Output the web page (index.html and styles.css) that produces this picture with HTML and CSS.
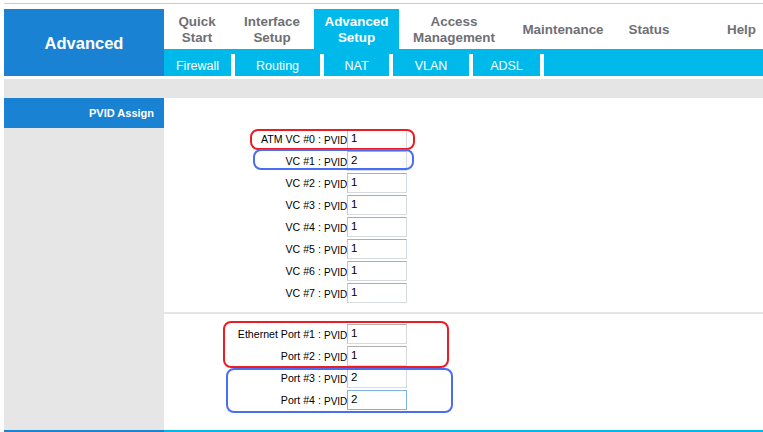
FILE: index.html
```html
<!DOCTYPE html>
<html>
<head>
<meta charset="utf-8">
<link rel="stylesheet" href="styles.css">
</head>
<body>
<div class="page">
  <div class="top-line"></div>
  <header class="header">
    <div class="brand">Advanced</div>
    <div class="nav">
      <div class="tabs">
        <div class="tab t-quick">Quick<br>Start</div>
        <div class="tab t-iface">Interface<br>Setup</div>
        <div class="tab t-adv active">Advanced<br>Setup</div>
        <div class="tab t-access">Access<br>Management</div>
        <div class="tab t-maint">Maintenance</div>
        <div class="tab t-status">Status</div>
        <div class="tab t-help">Help</div>
      </div>
      <div class="subnav">
        <div class="sub s-fw">Firewall</div>
        <div class="sub s-rt">Routing</div>
        <div class="sub s-nat">NAT</div>
        <div class="sub s-vlan">VLAN</div>
        <div class="sub s-adsl">ADSL</div>
        <div class="sub s-rest"></div>
      </div>
    </div>
  </header>
  <div class="band"></div>
  <main class="main">
    <aside class="sidebar">
      <div class="side-title">PVID Assign</div>
    </aside>
    <section class="content">
      <div class="group g1">
        <div class="row"><span class="lbl">ATM VC #0</span><span class="colon">:</span><span class="pvid">PVID</span><span class="inp">1</span></div>
        <div class="row"><span class="lbl">VC #1</span><span class="colon">:</span><span class="pvid">PVID</span><span class="inp">2</span></div>
        <div class="row"><span class="lbl">VC #2</span><span class="colon">:</span><span class="pvid">PVID</span><span class="inp">1</span></div>
        <div class="row"><span class="lbl">VC #3</span><span class="colon">:</span><span class="pvid">PVID</span><span class="inp">1</span></div>
        <div class="row"><span class="lbl">VC #4</span><span class="colon">:</span><span class="pvid">PVID</span><span class="inp">1</span></div>
        <div class="row"><span class="lbl">VC #5</span><span class="colon">:</span><span class="pvid">PVID</span><span class="inp">1</span></div>
        <div class="row"><span class="lbl">VC #6</span><span class="colon">:</span><span class="pvid">PVID</span><span class="inp">1</span></div>
        <div class="row"><span class="lbl">VC #7</span><span class="colon">:</span><span class="pvid">PVID</span><span class="inp">1</span></div>
      </div>
      <div class="sep"></div>
      <div class="group g2">
        <div class="row"><span class="lbl">Ethernet Port #1</span><span class="colon">:</span><span class="pvid">PVID</span><span class="inp">1</span></div>
        <div class="row"><span class="lbl">Port #2</span><span class="colon">:</span><span class="pvid">PVID</span><span class="inp">1</span></div>
        <div class="row"><span class="lbl">Port #3</span><span class="colon">:</span><span class="pvid">PVID</span><span class="inp">2</span></div>
        <div class="row"><span class="lbl">Port #4</span><span class="colon">:</span><span class="pvid">PVID</span><span class="inp focus">2</span></div>
      </div>
      <div class="mark red m1"></div>
      <div class="mark blue m2"></div>
      <div class="mark red m3"></div>
      <div class="mark blue m4"></div>
    </section>
  </main>
  <div class="bottom">
    <div class="bottom-left"></div>
    <div class="bottom-right"></div>
  </div>
</div>
</body>
</html>
```

FILE: styles.css
```css
html, body {
  margin: 0;
  padding: 0;
  background: #fff;
  font-family: "Liberation Sans", Arial, sans-serif;
  overflow: hidden;
}
.page {
  margin-left: 4px;
  width: 759px;
  padding-top: 3px;
}
.top-line {
  height: 1px;
  background: #cccccc;
  margin-bottom: 5px;
}
.header {
  display: flex;
  height: 67px;
}
.brand {
  width: 160px;
  background: #1a82d3;
  color: #fff;
  font-weight: bold;
  font-size: 16.5px;
  display: flex;
  align-items: center;
  justify-content: center;
  padding-top: 1px;
  box-sizing: border-box;
}
.nav {
  flex: 1;
  display: flex;
  flex-direction: column;
}
.tabs {
  display: flex;
  height: 40px;
}
.tab {
  display: flex;
  align-items: center;
  justify-content: center;
  text-align: center;
  font-weight: bold;
  font-size: 13.4px;
  line-height: 16px;
  color: #6f6f74;
  padding-top: 1px;
  box-sizing: border-box;
}
.tab.active {
  background: #00b9eb;
  color: #fff;
}
.t-quick { width: 66px; }
.t-iface { width: 84px; }
.t-adv { width: 85px; }
.t-access { width: 110px; }
.t-maint { width: 108px; }
.t-status { width: 64px; }
.t-help { flex: 1; justify-content: flex-end; padding-right: 7px; }
.subnav {
  height: 27px;
  background: #00b9eb;
  padding-top: 5px;
  box-sizing: border-box;
  display: flex;
}
.sub {
  color: #fff;
  font-size: 12.5px;
  display: flex;
  align-items: center;
  justify-content: center;
  border-right: 4px solid #fff;
  height: 22px;
  padding-top: 1px;
  box-sizing: border-box;
}
.s-fw { width: 71px; }
.s-rt { width: 89px; }
.s-nat { width: 69px; }
.s-vlan { width: 80px; }
.s-adsl { width: 71px; }
.s-rest { flex: 1; border-right: none; }
.band {
  height: 19px;
  margin-top: 3px;
  background: #e5e5e5;
}
.main {
  display: flex;
  height: 332px;
}
.sidebar {
  width: 160px;
  background: #e6e6e6;
}
.side-title {
  height: 30px;
  background: #1a82d3;
  color: #fff;
  font-weight: bold;
  font-size: 11px;
  display: flex;
  align-items: center;
  justify-content: flex-end;
  padding-right: 10px;
  box-sizing: border-box;
}
.content {
  flex: 1;
  position: relative;
}
.group.g1 {
  padding-top: 31px;
  padding-bottom: 7px;
}
.group.g2 {
  padding-top: 10px;
}
.sep {
  height: 2px;
  background: #e5e5e5;
}
.row {
  display: flex;
  height: 22px;
  align-items: flex-start;
  font-size: 10.6px;
  color: #000;
}
.lbl {
  width: 151px;
  text-align: right;
  line-height: 20px;
}
.colon {
  width: 9px;
  text-align: center;
  line-height: 20px;
}
.pvid {
  width: 23px;
  line-height: 20px;
  padding-top: 2px;
  font-size: 10px;
  white-space: nowrap;
}
.inp {
  width: 60px;
  height: 20px;
  box-sizing: border-box;
  border: 1px solid #d6dbe1;
  border-top-color: #adadad;
  border-left-color: #c4c8cc;
  font-size: 11.5px;
  line-height: 17px;
  padding-left: 3px;
  background: #fff;
}
.inp.focus {
  border-color: #7db4e6;
}
.mark {
  position: absolute;
  box-sizing: border-box;
  border-width: 2px;
  border-style: solid;
  border-radius: 8px;
}
.red { border-color: #ed1c24; }
.blue { border-color: #4a6ef2; }
.m1 { left: 86px; top: 31px; width: 165px; height: 21px; }
.m2 { left: 89px; top: 51px; width: 161px; height: 21px; }
.m3 { left: 59px; top: 223px; width: 226px; height: 47px; }
.m4 { left: 62px; top: 270px; width: 227px; height: 45px; }
.bottom {
  display: flex;
  height: 2px;
}
.bottom-left {
  width: 160px;
  background: #1a82d3;
}
.bottom-right {
  flex: 1;
  background: #00b9eb;
}
```
